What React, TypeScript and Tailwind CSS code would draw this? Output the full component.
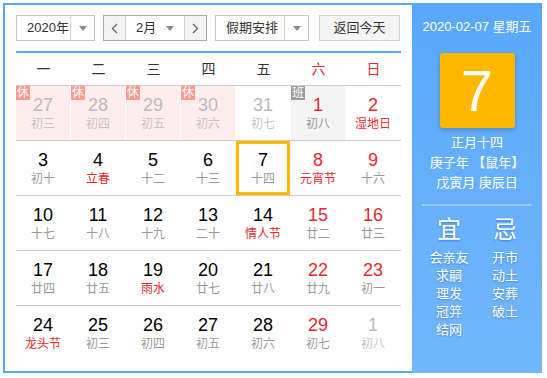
import React from "react";

interface Day {
    n: number;
    lunar: string;
    other?: boolean;
    redNum?: boolean;
    redLunar?: boolean;
    badge?: "休" | "班";
    today?: boolean;
}

const weeks: Day[][] = [
    [
        { n: 27, lunar: "初三", other: true, badge: "休" },
        { n: 28, lunar: "初四", other: true, badge: "休" },
        { n: 29, lunar: "初五", other: true, badge: "休" },
        { n: 30, lunar: "初六", other: true, badge: "休" },
        { n: 31, lunar: "初七", other: true },
        { n: 1, lunar: "初八", redNum: true, badge: "班" },
        { n: 2, lunar: "湿地日", redNum: true, redLunar: true },
    ],
    [
        { n: 3, lunar: "初十" },
        { n: 4, lunar: "立春", redLunar: true },
        { n: 5, lunar: "十二" },
        { n: 6, lunar: "十三" },
        { n: 7, lunar: "十四", today: true },
        { n: 8, lunar: "元宵节", redNum: true, redLunar: true },
        { n: 9, lunar: "十六", redNum: true },
    ],
    [
        { n: 10, lunar: "十七" },
        { n: 11, lunar: "十八" },
        { n: 12, lunar: "十九" },
        { n: 13, lunar: "二十" },
        { n: 14, lunar: "情人节", redLunar: true },
        { n: 15, lunar: "廿二", redNum: true },
        { n: 16, lunar: "廿三", redNum: true },
    ],
    [
        { n: 17, lunar: "廿四" },
        { n: 18, lunar: "廿五" },
        { n: 19, lunar: "雨水", redLunar: true },
        { n: 20, lunar: "廿七" },
        { n: 21, lunar: "廿八" },
        { n: 22, lunar: "廿九", redNum: true },
        { n: 23, lunar: "初一", redNum: true },
    ],
    [
        { n: 24, lunar: "龙头节", redLunar: true },
        { n: 25, lunar: "初三" },
        { n: 26, lunar: "初四" },
        { n: 27, lunar: "初五" },
        { n: 28, lunar: "初六" },
        { n: 29, lunar: "初七", redNum: true },
        { n: 1, lunar: "初八", other: true },
    ],
];

const weekdays = ["一", "二", "三", "四", "五", "六", "日"];
const good = ["会亲友", "求嗣", "理发", "冠笄", "结网"];
const bad = ["开市", "动土", "安葬", "破土"];

function Caret() {
    return <span className="w-0 h-0 border-x-[4px] border-x-transparent border-t-[5px] border-t-[#8a8a8a]" />;
}

function Chevron({ dir }: { dir: "left" | "right" }) {
    return (
        <svg width="7" height="11" viewBox="0 0 7 11">
            <polyline
                points={dir === "left" ? "6,1 1.5,5.5 6,10" : "1,1 5.5,5.5 1,10"}
                fill="none"
                stroke="#666"
                strokeWidth="1.3"
            />
        </svg>
    );
}

function Cell({ d }: { d: Day }) {
    let bg = "bg-white";
    if (d.badge === "休") bg = "bg-[#fdeeed]";
    if (d.badge === "班") bg = "bg-[#f4f4f4]";

    let numColor = "text-black";
    if (d.redNum) numColor = "text-[#e22a2f]";
    if (d.other) numColor = "text-[#bbbbbb]";

    let lunarColor = "text-[#999999]";
    if (d.redLunar) lunarColor = "text-[#e22a2f]";
    if (d.other) lunarColor = "text-[#c4c4c4]";

    return (
        <div className="w-[55px] h-[54px] pr-[1px]">
            <div
                className={`relative h-full flex flex-col items-center pt-[9px] ${bg} ${
                    d.today ? "shadow-[inset_0_0_0_3px_#ffb800]" : ""
                }`}
            >
                {d.badge && (
                    <span
                        className={`absolute left-0 top-0 w-[14px] h-[14px] text-[12px] leading-[14px] text-center text-white ${
                            d.badge === "休" ? "bg-[#fb9a8e]" : "bg-[#9b9b9b]"
                        }`}
                    >
                        {d.badge}
                    </span>
                )}
                <span className={`text-[18px] leading-[20px] ${numColor}`}>{d.n}</span>
                <span className={`mt-[1px] text-[12px] leading-[16px] ${lunarColor}`}>{d.lunar}</span>
            </div>
        </div>
    );
}

export default function App() {
    return (
        <div className="font-['Liberation_Sans','Noto_Sans_CJK_SC',sans-serif] p-[3px]">
            <div className="w-[539px] h-[370px] border-2 border-[#5aa6f2] flex bg-white">
                <div className="w-[407px] pl-[11px] pt-[10px]">
                    <div className="flex items-center h-[26px] text-[13px] text-[#333]">
                        <div className="w-[79px] h-[26px] border border-[#c6c6c6] flex">
                            <span className="flex-1 pl-[10px] leading-[24px]">2020年</span>
                            <span className="w-[24px] border-l border-[#d6d6d6] flex items-center justify-center">
                                <Caret />
                            </span>
                        </div>
                        <div className="ml-[8px] w-[104px] h-[26px] border border-[#a9a9a9] flex">
                            <span className="w-[22px] bg-[#f3f3f3] border-r border-[#cfcfcf] flex items-center justify-center">
                                <Chevron dir="left" />
                            </span>
                            <span className="flex-1 flex items-center pl-[10px] pr-[10px] justify-between">
                                <span className="leading-[24px]">2月</span>
                                <Caret />
                            </span>
                            <span className="w-[22px] bg-[#f3f3f3] border-l border-[#cfcfcf] flex items-center justify-center">
                                <Chevron dir="right" />
                            </span>
                        </div>
                        <div className="ml-[8px] w-[94px] h-[26px] border border-[#c6c6c6] flex">
                            <span className="flex-1 pl-[10px] leading-[24px]">假期安排</span>
                            <span className="w-[24px] border-l border-[#d6d6d6] flex items-center justify-center">
                                <Caret />
                            </span>
                        </div>
                        <button className="ml-[10px] w-[81px] h-[26px] border border-[#d2d2d2] bg-[#f5f5f5] leading-[24px] text-center">
                            返回今天
                        </button>
                    </div>

                    <div className="mt-[10px] w-[385px] h-[2px] bg-[#5aa6f2]" />

                    <div className="flex w-[385px] h-[32px] items-center text-[14px]">
                        {weekdays.map((w, i) => (
                            <span
                                key={w}
                                className={`w-[55px] text-center ${i >= 5 ? "text-[#e22a2f]" : "text-[#333]"}`}
                            >
                                {w}
                            </span>
                        ))}
                    </div>

                    <div className="w-[385px] border-t border-[#cccccc]">
                        {weeks.map((week, wi) => (
                            <div
                                key={wi}
                                className={`flex ${wi < weeks.length - 1 ? "border-b border-[#cccccc]" : ""}`}
                            >
                                {week.map((d, di) => (
                                    <Cell key={di} d={d} />
                                ))}
                            </div>
                        ))}
                    </div>
                </div>

                <div className="w-[130px] -mt-[2px] -mb-[2px] -mr-[2px] bg-gradient-to-b from-[#58a8fb] to-[#73b7fb] text-white flex flex-col items-center">
                    <div className="mt-[14px] text-[13px] leading-[20px]">2020-02-07 星期五</div>
                    <div className="mt-[16px] w-[75px] h-[75px] bg-[#ffb800] rounded-[3px] shadow-[0_2px_5px_rgba(0,0,0,0.2)] flex items-center justify-center text-[58px] leading-none">
                        7
                    </div>
                    <div className="mt-[5px] text-[13px] leading-[20px] text-center">
                        <div>正月十四</div>
                        <div>庚子年 【鼠年】</div>
                        <div>戊寅月 庚辰日</div>
                    </div>
                    <div className="mt-[11px] w-[110px] h-[2px] bg-[#9ccbfb]" />
                    <div className="mt-[10px] flex w-[112px] [text-shadow:0_1px_2px_rgba(0,40,100,0.35)]">
                        <div className="w-[56px] flex flex-col items-center">
                            <span className="text-[24px] leading-[28px]">宜</span>
                            <div className="mt-[5px] flex flex-col items-center text-[13px] leading-[18px]">
                                {good.map((g) => (
                                    <span key={g}>{g}</span>
                                ))}
                            </div>
                        </div>
                        <div className="w-[56px] flex flex-col items-center">
                            <span className="text-[24px] leading-[28px]">忌</span>
                            <div className="mt-[5px] flex flex-col items-center text-[13px] leading-[18px]">
                                {bad.map((b) => (
                                    <span key={b}>{b}</span>
                                ))}
                            </div>
                        </div>
                    </div>
                </div>
            </div>
        </div>
    );
}
